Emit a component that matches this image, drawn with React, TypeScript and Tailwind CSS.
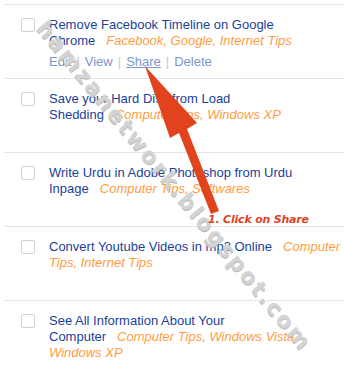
import React from "react";

type Row = {
  lines: React.ReactNode[];
  actions?: boolean;
};

const T = ({ children }: { children: React.ReactNode }) => (
  <span className="text-[#1b3f9a]">{children}</span>
);
const C = ({ children, gap = true }: { children: React.ReactNode; gap?: boolean }) => (
  <span className={`italic text-[#ff9c3f] ${gap ? "ml-[11px]" : ""}`}>{children}</span>
);

const rows: Row[] = [
  {
    lines: [
      <T>Remove Facebook Timeline on Google</T>,
      <>
        <T>Chrome</T>
        <C>Facebook, Google, Internet Tips</C>
      </>,
    ],
    actions: true,
  },
  {
    lines: [
      <T>Save your Hard Disk from Load</T>,
      <>
        <T>Shedding</T>
        <C>Computer Tips, Windows XP</C>
      </>,
    ],
  },
  {
    lines: [
      <T>Write Urdu in Adobe Photoshop from Urdu</T>,
      <>
        <T>Inpage</T>
        <C>Computer Tips, Softwares</C>
      </>,
    ],
  },
  {
    lines: [
      <>
        <T>Convert Youtube Videos in mp3 Online</T>
        <C>Computer</C>
      </>,
      <C gap={false}>Tips, Internet Tips</C>,
    ],
  },
  {
    lines: [
      <T>See All Information About Your</T>,
      <>
        <T>Computer</T>
        <C>Computer Tips, Windows Vista,</C>
      </>,
      <C gap={false}>Windows XP</C>,
    ],
  },
];

export default function App() {
  return (
    <div className="relative w-[344px] h-[369px] overflow-hidden bg-white font-['Liberation_Sans',Arial,sans-serif] text-[13px]">
      <div className="pt-[4px] pl-[4px]">
        {rows.map((r, i) => (
          <div key={i} className="flex min-h-[74px] border-t border-[#e4e4e4] pt-[12px] pb-[8px]">
            <div className="ml-[17px] mt-[1px] w-[14px] h-[14px] shrink-0 border border-[#d2d2d2] rounded-[2px] bg-white" />
            <div className="ml-[14px] flex flex-col">
              {r.lines.map((l, j) => (
                <div key={j} className="leading-[16px] whitespace-nowrap">
                  {l}
                </div>
              ))}
              <div className={`mt-[5px] leading-[16px] whitespace-nowrap text-[#7b96cb] ${r.actions ? "" : "invisible"}`}>
                <span>Edit</span>
                <span className="text-[#c8c8c8] mx-[5px]">|</span>
                <span>View</span>
                <span className="text-[#c8c8c8] mx-[5px]">|</span>
                <span className="underline">Share</span>
                <span className="text-[#c8c8c8] mx-[5px]">|</span>
                <span>Delete</span>
              </div>
            </div>
          </div>
        ))}
      </div>

      {/* watermark */}
      <div className="absolute left-[174px] top-[186px] -translate-x-1/2 -translate-y-1/2 rotate-[50.6deg] whitespace-nowrap font-['DejaVu_Sans',sans-serif] font-bold text-[22px] leading-[22px] tracking-[2.4px] text-[#d4d4d4] [text-shadow:1px_1px_0_#bcbcbc]">
        hamzanetwork.blogspot.com
      </div>

      {/* arrow */}
      <svg className="absolute left-0 top-0" width="344" height="369" viewBox="0 0 344 369">
        <polygon
          points="145,66 197,123 187,129 219,211 211,214 179,133 170,138"
          fill="#e2431f"
        />
      </svg>

      <div className="absolute left-[208px] top-[213px] whitespace-nowrap font-['DejaVu_Sans',sans-serif] font-bold italic text-[11px] leading-[13px] tracking-[-0.2px] text-[#e2431f]">
        1. Click on Share
      </div>
    </div>
  );
}
